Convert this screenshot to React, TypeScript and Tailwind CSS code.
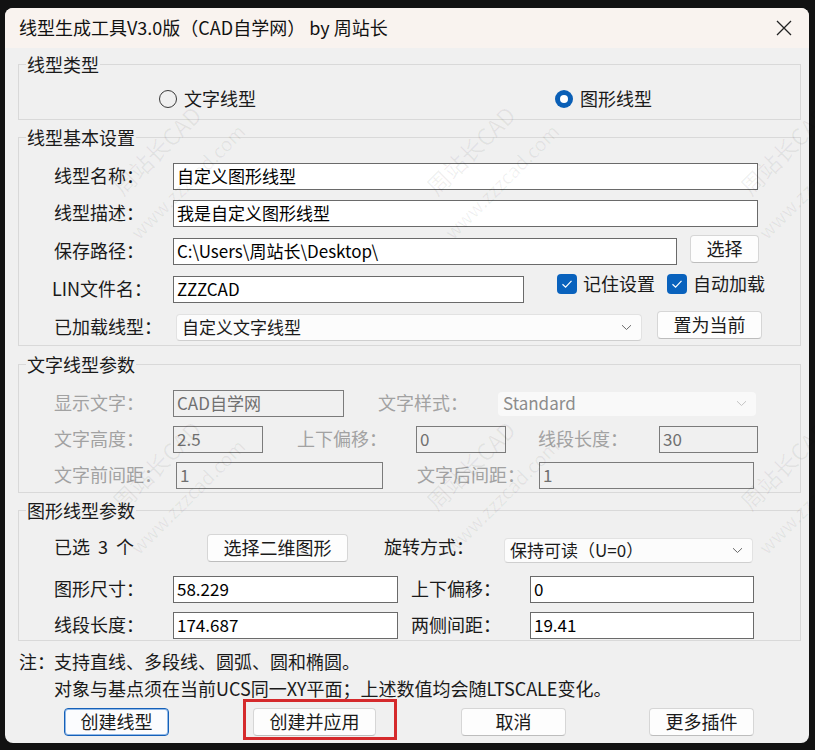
import type { ReactNode } from "react";

// faint diagonal site stamps laid over the dialog
const stamps = [
  "left-[171px] top-[165px]",
  "left-[485px] top-[165px]",
  "left-[799px] top-[165px]",
  "left-[171px] top-[480px]",
  "left-[485px] top-[480px]",
  "left-[799px] top-[480px]",
];

function Group({
  title,
  className,
  children,
}: {
  title: string;
  className: string;
  children: ReactNode;
}) {
  return (
    <fieldset
      className={`ml-[13px] w-[783px] border border-[#d9d9d9] ${className}`}
    >
      <legend className="ml-[7px] px-[1px] text-[18px] leading-[24px] text-[#1a1a1a]">
        {title}
      </legend>
      {children}
    </fieldset>
  );
}

function TextBox({
  className,
  value,
  disabled,
}: {
  className: string;
  value: string;
  disabled?: boolean;
}) {
  return (
    <div
      className={`flex h-[27px] shrink-0 items-center overflow-hidden whitespace-nowrap border px-[3px] pb-[2px] text-[17px] leading-none ${
        disabled
          ? "border-[#7b7b7b] bg-[#f0f0f0] text-[#707070]"
          : "border-[#6a6a6a] bg-white text-black"
      } ${className}`}
    >
      {value}
    </div>
  );
}

function Chevron({ muted }: { muted?: boolean }) {
  return (
    <svg width="11" height="7" viewBox="0 0 11 7" fill="none">
      <path
        d="M1 1.2 L5.5 5.5 L10 1.2"
        stroke={muted ? "#c4c4c4" : "#6a6a6a"}
        strokeWidth="1"
      />
    </svg>
  );
}

function Combo({
  className,
  value,
  disabled,
}: {
  className: string;
  value: string;
  disabled?: boolean;
}) {
  return (
    <div
      className={`flex shrink-0 items-center justify-between rounded-[4px] pl-[5px] pr-[9px] text-[17px] ${
        disabled
          ? "bg-[#f9f9f9] text-[#8c8c8c]"
          : "border border-[#e2e2e2] border-b-[#cfcfcf] bg-[#fcfcfc] text-[#1a1a1a]"
      } ${className}`}
    >
      <span className="pb-[2px] leading-none">{value}</span>
      <Chevron muted={disabled} />
    </div>
  );
}

function Button({
  className,
  children,
  primary,
}: {
  className: string;
  children: ReactNode;
  primary?: boolean;
}) {
  return (
    <button
      className={`flex h-[28px] shrink-0 items-center justify-center rounded-[4px] pb-[2px] text-[18px] leading-none text-[#1a1a1a] ${
        primary
          ? "border border-[#1560b8] bg-[#fbfcfe] shadow-[inset_0_0_0_1px_#8fb8e8]"
          : "border border-[#d6d6d6] border-b-[#bdbdbd] bg-[#fdfdfd]"
      } ${className}`}
    >
      {children}
    </button>
  );
}

function Check({ label }: { label: string }) {
  return (
    <div className="flex items-center gap-[6px]">
      <span className="flex h-[20px] w-[20px] items-center justify-center rounded-[4px] bg-[#0962bd]">
        <svg width="12" height="10" viewBox="0 0 12 10" fill="none">
          <path d="M1.5 5.2 L4.6 8.2 L10.5 1.8" stroke="white" strokeWidth="1.2" />
        </svg>
      </span>
      <span className="pb-[2px] text-[18px] leading-none text-[#1a1a1a]">{label}</span>
    </div>
  );
}

function Radio({ label, checked }: { label: string; checked?: boolean }) {
  return (
    <div className="flex items-center gap-[7px]">
      {checked ? (
        <span className="flex h-[18px] w-[18px] items-center justify-center rounded-full bg-[#0a5fb6]">
          <span className="h-[8px] w-[8px] rounded-full bg-white" />
        </span>
      ) : (
        <span className="h-[18px] w-[18px] rounded-full border border-[#3a3a3a]" />
      )}
      <span className="pb-[2px] text-[18px] leading-none text-[#1a1a1a]">{label}</span>
    </div>
  );
}

const lbl = "shrink-0 whitespace-nowrap pb-[4px] text-[18px] leading-none text-[#1a1a1a]";
const dim = "shrink-0 whitespace-nowrap pb-[4px] text-[18px] leading-none text-[#a2a2a2]";

export default function App() {
  return (
    <div className="relative h-[750px] w-[815px] overflow-hidden bg-[#121212] pl-[5px] pt-[8px] font-['Noto_Sans_CJK_SC','Noto_Sans',sans-serif]">
      <div className="flex h-[735px] w-[804px] flex-col overflow-hidden rounded-[8px] bg-[#f0f0f0]">
        {/* title bar */}
        <div className="flex h-[40px] shrink-0 items-center justify-between bg-[#f9f3ef] pl-[14px] pr-[17px]">
          <span className="pb-[2px] text-[18px] leading-none text-[#111]">
            线型生成工具V3.0版（CAD自学网） by 周站长
          </span>
          <svg width="16" height="16" viewBox="0 0 16 16" fill="none">
            <path d="M1 1 L15 15 M15 1 L1 15" stroke="#222" strokeWidth="1.3" />
          </svg>
        </div>

        <Group title="线型类型" className="mt-[4px] pb-[10px]">
          <div className="mt-[13px] flex h-[20px] items-center pl-[140px]">
            <Radio label="文字线型" />
            <div className="ml-[299px]">
              <Radio label="图形线型" checked />
            </div>
          </div>
        </Group>

        <Group title="线型基本设置" className="mt-[5px] pb-[4px]">
          <div className="mt-[14px] flex h-[27px] items-center pl-[35px]">
            <span className={`${lbl} w-[119px]`}>线型名称：</span>
            <TextBox className="w-[585px]" value="自定义图形线型" />
          </div>
          <div className="mt-[10px] flex h-[27px] items-center pl-[35px]">
            <span className={`${lbl} w-[119px]`}>线型描述：</span>
            <TextBox className="w-[585px]" value="我是自定义图形线型" />
          </div>
          <div className="mt-[11px] flex h-[27px] items-center pl-[35px]">
            <span className={`${lbl} w-[119px]`}>保存路径：</span>
            <TextBox className="w-[504px]" value="C:\Users\周站长\Desktop\" />
            <Button className="mb-[6px] ml-[13px] w-[69px]">选择</Button>
          </div>
          <div className="mt-[11px] flex h-[27px] items-center pl-[33px]">
            <span className={`${lbl} w-[121px]`}>LIN文件名：</span>
            <TextBox className="w-[351px]" value="ZZZCAD" />
            <div className="mb-[11px] ml-[33px] flex items-center gap-[12px]">
              <Check label="记住设置" />
              <Check label="自动加载" />
            </div>
          </div>
          <div className="mt-[11px] flex h-[27px] items-center pl-[35px]">
            <span className={`${lbl} w-[122px]`}>已加载线型：</span>
            <Combo className="h-[27px] w-[466px]" value="自定义文字线型" />
            <Button className="mb-[5px] ml-[15px] h-[27px] w-[105px]">置为当前</Button>
          </div>
        </Group>

        <Group title="文字线型参数" className="mt-[6px] pb-[3px]">
          <div className="mt-[14px] flex h-[27px] items-center pl-[35px]">
            <span className={`${dim} w-[119px]`}>显示文字：</span>
            <TextBox className="w-[171px]" value="CAD自学网" disabled />
            <span className={`${dim} ml-[34px] w-[120px]`}>文字样式：</span>
            <Combo className="h-[24px] w-[258px]" value="Standard" disabled />
          </div>
          <div className="mt-[9px] flex h-[27px] items-center pl-[35px]">
            <span className={`${dim} w-[119px]`}>文字高度：</span>
            <TextBox className="w-[90px]" value="2.5" disabled />
            <span className={`${dim} ml-[34px] w-[119px]`}>上下偏移：</span>
            <TextBox className="w-[90px]" value="0" disabled />
            <span className={`${dim} ml-[32px] w-[121px]`}>线段长度：</span>
            <TextBox className="w-[99px]" value="30" disabled />
          </div>
          <div className="mt-[9px] flex h-[27px] items-center pl-[35px]">
            <span className={`${dim} w-[122px]`}>文字前间距：</span>
            <TextBox className="w-[207px]" value="1" disabled />
            <span className={`${dim} ml-[34px] w-[122px]`}>文字后间距：</span>
            <TextBox className="w-[215px]" value="1" disabled />
          </div>
        </Group>

        <Group title="图形线型参数" className="mt-[5px] pb-[1px]">
          <div className="mt-[12px] flex h-[28px] items-center pl-[35px]">
            <span className={`${lbl} flex w-[153px]`}>
              <span>已选</span>
              <span className="mx-[8px]">3</span>
              <span>个</span>
            </span>
            <Button className="w-[141px]">选择二维图形</Button>
            <span className={`${lbl} ml-[36px] w-[120px]`}>旋转方式：</span>
            <Combo className="mt-[5px] h-[25px] w-[249px]" value="保持可读（U=0）" />
          </div>
          <div className="mt-[14px] flex h-[27px] items-center pl-[35px]">
            <span className={`${lbl} w-[119px]`}>图形尺寸：</span>
            <TextBox className="w-[225px]" value="58.229" />
            <span className={`${lbl} ml-[13px] w-[119px]`}>上下偏移：</span>
            <TextBox className="w-[224px]" value="0" />
          </div>
          <div className="mt-[9px] flex h-[27px] items-center pl-[35px]">
            <span className={`${lbl} w-[119px]`}>线段长度：</span>
            <TextBox className="w-[225px]" value="174.687" />
            <span className={`${lbl} ml-[13px] w-[119px]`}>两侧间距：</span>
            <TextBox className="w-[224px]" value="19.41" />
          </div>
        </Group>

        <div className="mt-[7px] pl-[14px] text-[18px] leading-[27px] text-[#1a1a1a]">
          <div className="flex">
            <span className="w-[35px]">注：</span>
            <span>支持直线、多段线、圆弧、圆和椭圆。</span>
          </div>
          <div className="pl-[35px]">
            对象与基点须在当前UCS同一XY平面；上述数值均会随LTSCALE变化。
          </div>
        </div>

        <div className="mt-[6px] flex items-center pl-[59px]">
          <Button className="w-[105px]" primary>
            创建线型
          </Button>
          <div className="relative ml-[84px]">
            <Button className="w-[123px]">创建并应用</Button>
            <span className="pointer-events-none absolute -bottom-[4px] -left-[10px] -right-[21px] -top-[9px] border-[3px] border-[#d52a2c]" />
          </div>
          <Button className="ml-[85px] w-[105px]">取消</Button>
          <Button className="ml-[83px] w-[105px]">更多插件</Button>
        </div>
      </div>

      {stamps.map((pos) => (
        <div
          key={pos}
          className={`pointer-events-none absolute z-10 flex -translate-x-1/2 -translate-y-1/2 -rotate-45 flex-col items-center gap-[22px] whitespace-nowrap text-black/[0.06] ${pos}`}
        >
          <span className="text-[23px] leading-none">周站长CAD</span>
          <span className="text-[19px] leading-none">www.zzzcad.com</span>
        </div>
      ))}
    </div>
  );
}
